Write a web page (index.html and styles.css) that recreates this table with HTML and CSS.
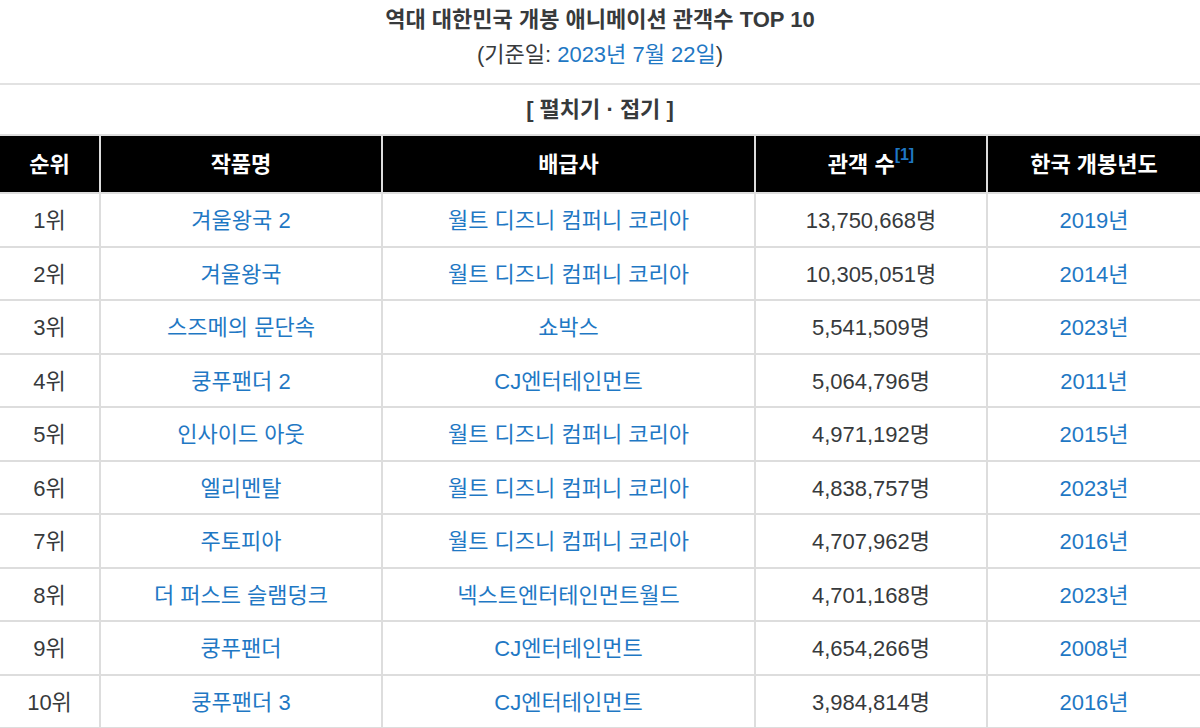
FILE: index.html
```html
<!DOCTYPE html>
<html lang="ko">
<head>
<meta charset="utf-8">
<link rel="stylesheet" href="styles.css">
</head>
<body>
<div class="head">
  <div class="title">역대 대한민국 개봉 애니메이션 관객수 TOP 10</div>
  <div class="sub">(기준일: <a class="lnk">2023년</a> <a class="lnk">7월 22일</a>)</div>
</div>
<div class="fold">[ 펼치기 · 접기 ]</div>
<table class="rank">
  <colgroup>
    <col class="c1"><col class="c2"><col class="c3"><col class="c4"><col class="c5">
  </colgroup>
  <thead>
    <tr><th>순위</th><th>작품명</th><th>배급사</th><th>관객 수<sup class="ref">[1]</sup></th><th>한국 개봉년도</th></tr>
  </thead>
  <tbody>
    <tr><td>1위</td><td><a class="lnk">겨울왕국 2</a></td><td><a class="lnk">월트 디즈니 컴퍼니 코리아</a></td><td>13,750,668명</td><td><a class="lnk">2019년</a></td></tr>
    <tr><td>2위</td><td><a class="lnk">겨울왕국</a></td><td><a class="lnk">월트 디즈니 컴퍼니 코리아</a></td><td>10,305,051명</td><td><a class="lnk">2014년</a></td></tr>
    <tr><td>3위</td><td><a class="lnk">스즈메의 문단속</a></td><td><a class="lnk">쇼박스</a></td><td>5,541,509명</td><td><a class="lnk">2023년</a></td></tr>
    <tr><td>4위</td><td><a class="lnk">쿵푸팬더 2</a></td><td><a class="lnk">CJ엔터테인먼트</a></td><td>5,064,796명</td><td><a class="lnk">2011년</a></td></tr>
    <tr><td>5위</td><td><a class="lnk">인사이드 아웃</a></td><td><a class="lnk">월트 디즈니 컴퍼니 코리아</a></td><td>4,971,192명</td><td><a class="lnk">2015년</a></td></tr>
    <tr><td>6위</td><td><a class="lnk">엘리멘탈</a></td><td><a class="lnk">월트 디즈니 컴퍼니 코리아</a></td><td>4,838,757명</td><td><a class="lnk">2023년</a></td></tr>
    <tr><td>7위</td><td><a class="lnk">주토피아</a></td><td><a class="lnk">월트 디즈니 컴퍼니 코리아</a></td><td>4,707,962명</td><td><a class="lnk">2016년</a></td></tr>
    <tr><td>8위</td><td><a class="lnk">더 퍼스트 슬램덩크</a></td><td><a class="lnk">넥스트엔터테인먼트월드</a></td><td>4,701,168명</td><td><a class="lnk">2023년</a></td></tr>
    <tr><td>9위</td><td><a class="lnk">쿵푸팬더</a></td><td><a class="lnk">CJ엔터테인먼트</a></td><td>4,654,266명</td><td><a class="lnk">2008년</a></td></tr>
    <tr><td>10위</td><td><a class="lnk">쿵푸팬더 3</a></td><td><a class="lnk">CJ엔터테인먼트</a></td><td>3,984,814명</td><td><a class="lnk">2016년</a></td></tr>
  </tbody>
</table>
</body>
</html>
```
FILE: styles.css
```css
html, body {
  margin: 0;
  padding: 0;
  background: #fff;
}
body {
  font-family: "Liberation Sans", "Noto Sans CJK KR", sans-serif;
  font-size: 22px;
  color: #373a3c;
  overflow: hidden;
}
.lnk {
  color: #1f78c4;
  text-decoration: none;
}
.head {
  text-align: center;
  padding-top: 3px;
  padding-bottom: 10px;
  border-bottom: 2px solid #e2e2e2;
}
.title {
  font-weight: bold;
  line-height: 34px;
}
.sub {
  line-height: 36px;
}
.fold {
  text-align: center;
  font-weight: bold;
  line-height: 49px;
}
.rank {
  width: 100%;
  border-collapse: collapse;
  table-layout: fixed;
  border-top: 2px solid #e2e2e2;
}
.c1 { width: 100px; }
.c2 { width: 282px; }
.c3 { width: 373px; }
.c4 { width: 232px; }
.c5 { width: auto; }
.rank th, .rank td {
  border: 2px solid #dddddd;
  text-align: center;
  padding: 0 4px;
}
.rank th:first-child, .rank td:first-child { border-left: none; }
.rank th:last-child, .rank td:last-child { border-right: none; }
.rank th {
  background: #000;
  color: #fff;
  font-weight: bold;
  height: 51px;
  padding-bottom: 5px;
}
.rank td {
  height: 48.5px;
  padding-bottom: 3px;
}
.ref {
  color: #1f78c4;
  font-size: 16px;
  font-weight: bold;
  vertical-align: 12px;
  line-height: 0;
}
```
